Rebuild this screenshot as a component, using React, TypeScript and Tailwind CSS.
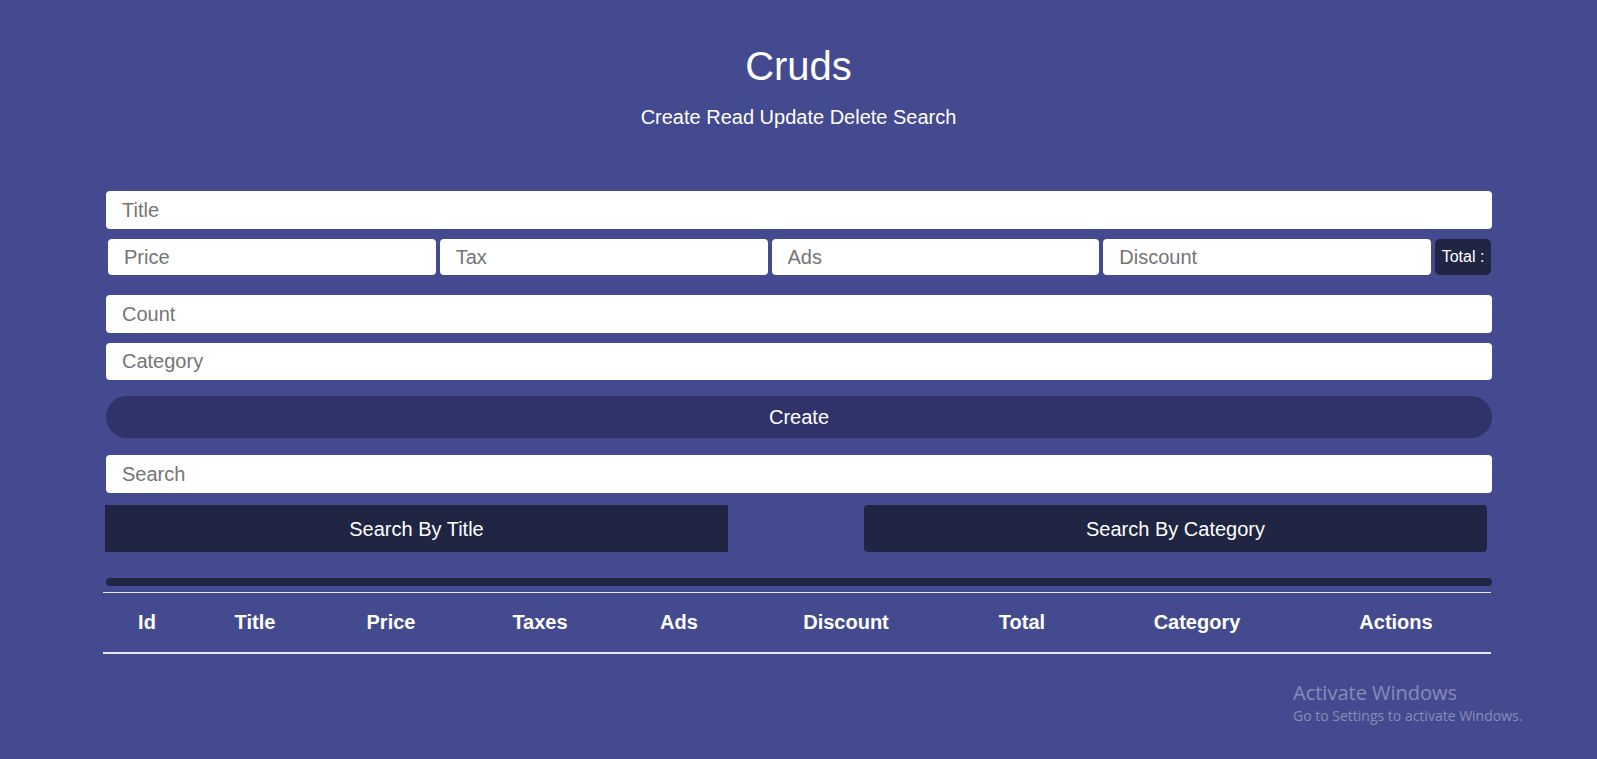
import React, { useState } from 'react';

const headers = [
  { label: 'Id', w: 'w-[88px]' },
  { label: 'Title', w: 'w-[128px]' },
  { label: 'Price', w: 'w-[144px]' },
  { label: 'Taxes', w: 'w-[154px]' },
  { label: 'Ads', w: 'w-[124px]' },
  { label: 'Discount', w: 'w-[210px]' },
  { label: 'Total', w: 'w-[142px]' },
  { label: 'Category', w: 'w-[208px]' },
  { label: 'Actions', w: 'w-[190px]' },
];

const inputBase =
  'bg-white rounded-[4px] pl-4 text-[20px] text-[#333] placeholder:text-[#757575] outline-none';

export default function App() {
  const [price, setPrice] = useState('');
  const [tax, setTax] = useState('');
  const [ads, setAds] = useState('');
  const [discount, setDiscount] = useState('');

  // total only shows once a price is typed
  const total = price ? +price + +tax + +ads - +discount : '';

  return (
    <div className="relative min-h-screen bg-[#434a8f] font-['Liberation_Sans',Arial,sans-serif] text-white overflow-hidden">
      {/* Header */}
      <div className="text-center pt-[44px]">
        <h1 className="text-[40px] leading-[45px]">Cruds</h1>
        <p className="mt-[16px] text-[20px] leading-[24px]">Create Read Update Delete Search</p>
      </div>

      <div className="w-[1386px] ml-[106px] mt-[62px]">
        {/* Inputs */}
        <input type="text" placeholder="Title" className={`${inputBase} w-full h-[38px] block`} />

        <div className="flex gap-[4px] mt-[10px] ml-[2px] mr-[1px] items-center">
          <input
            type="number"
            placeholder="Price"
            value={price}
            onChange={(e) => setPrice(e.target.value)}
            className={`${inputBase} flex-1 min-w-0 h-[36px] rounded-[3px]`}
          />
          <input
            type="number"
            placeholder="Tax"
            value={tax}
            onChange={(e) => setTax(e.target.value)}
            className={`${inputBase} flex-1 min-w-0 h-[36px] rounded-[3px]`}
          />
          <input
            type="number"
            placeholder="Ads"
            value={ads}
            onChange={(e) => setAds(e.target.value)}
            className={`${inputBase} flex-1 min-w-0 h-[36px] rounded-[3px]`}
          />
          <input
            type="number"
            placeholder="Discount"
            value={discount}
            onChange={(e) => setDiscount(e.target.value)}
            className={`${inputBase} flex-1 min-w-0 h-[36px] rounded-[3px]`}
          />
          <small className="w-[56px] h-[36px] shrink-0 rounded-[5px] bg-[#1f2543] flex items-center justify-center text-[16px] whitespace-nowrap">
            Total : {total}
          </small>
        </div>

        <input type="number" placeholder="Count" className={`${inputBase} w-full h-[38px] block mt-[20px]`} />
        <input type="text" placeholder="Category" className={`${inputBase} w-full h-[37px] block mt-[10px]`} />

        <button className="w-full h-[42px] mt-[16px] rounded-full bg-[#30336a] text-[20px] text-white">
          Create
        </button>

        {/* Search */}
        <input type="text" placeholder="Search" className={`${inputBase} w-full h-[38px] block mt-[17px]`} />

        <div className="flex justify-between mt-[12px] -ml-[1px] mr-[5px]">
          <button className="w-[623px] h-[47px] bg-[#1f2543] text-[20px] text-white">Search By Title</button>
          <button className="w-[623px] h-[47px] bg-[#1f2543] rounded-[4px] text-[20px] text-white">
            Search By Category
          </button>
        </div>

        <div className="h-[8px] mt-[26px] rounded-full bg-[#1f2543]" />

        {/* Table */}
        <table className="table-fixed w-[1388px] -ml-[3px] mt-[6px] border-collapse">
          <thead>
            <tr className="border-t border-[#e6e6f5] border-b-2 border-b-[#e6e6f5]">
              {headers.map((h) => (
                <th key={h.label} className={`${h.w} h-[60px] text-[20px] font-bold text-center`}>
                  {h.label}
                </th>
              ))}
            </tr>
          </thead>
          <tbody />
        </table>
      </div>

      {/* Windows watermark */}
      <div className="absolute left-[1293px] top-[680px] font-['Open_Sans',sans-serif] text-[#878cb8] pointer-events-none">
        <div className="text-[20px] leading-[26px]">Activate Windows</div>
        <div className="text-[14px] leading-[20px]">Go to Settings to activate Windows.</div>
      </div>
    </div>
  );
}
